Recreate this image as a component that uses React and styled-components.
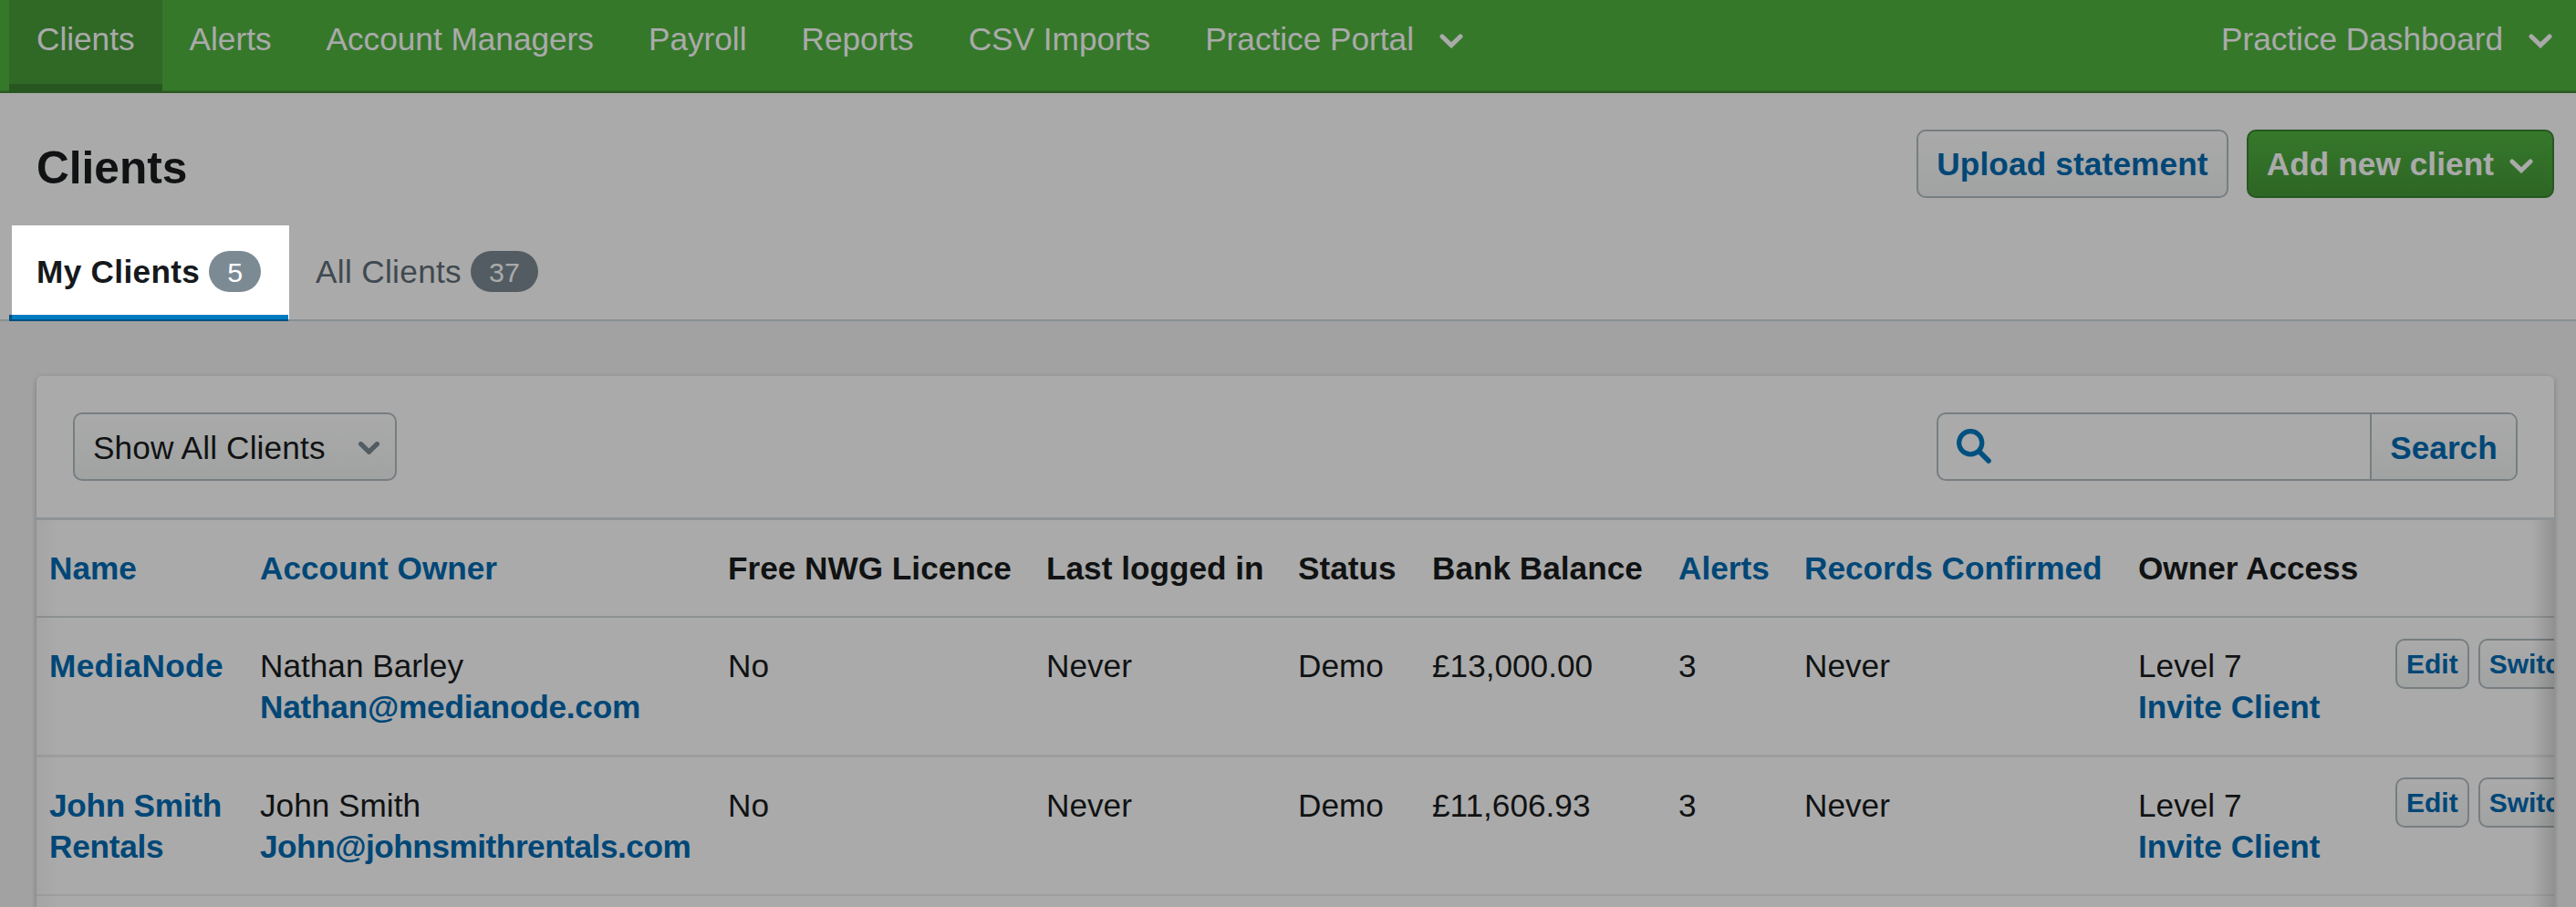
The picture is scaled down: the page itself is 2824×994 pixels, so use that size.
import styled, { createGlobalStyle } from "styled-components";

const columns = [
  { label: "Name", sortable: true },
  { label: "Account Owner", sortable: true },
  { label: "Free NWG Licence" },
  { label: "Last logged in" },
  { label: "Status" },
  { label: "Bank Balance" },
  { label: "Alerts", sortable: true },
  { label: "Records Confirmed", sortable: true },
  { label: "Owner Access" },
];

const clients = [
  {
    name: "MediaNode",
    nameSpacing: 0.35,
    owner: "Nathan Barley",
    email: "Nathan@medianode.com",
    emailSpacing: -0.22,
    balance: "£13,000.00",
  },
  {
    name: "John Smith Rentals",
    nameSpacing: -0.25,
    owner: "John Smith",
    email: "John@johnsmithrentals.com",
    emailSpacing: -0.47,
    balance: "£11,606.93",
  },
];

function Chevron({ size = 26, weight = 5 }) {
  return (
    <svg width={size} height={(size * 16) / 26} viewBox="0 0 26 16" fill="none">
      <path
        d="M3 3 L13 12.6 L23 3"
        stroke="currentColor"
        strokeWidth={weight}
        strokeLinecap="round"
      />
    </svg>
  );
}

function SearchIcon() {
  return (
    <svg width="38" height="38" viewBox="0 0 38 38" fill="none">
      <circle cx="15.2" cy="15.2" r="12.6" stroke="#007ac0" strokeWidth="5.2" />
      <path d="M24.5 24.5 L35 35" stroke="#007ac0" strokeWidth="5.6" strokeLinecap="round" />
    </svg>
  );
}

export default function App() {
  return (
    <Page>
      <GlobalStyle />
      <Nav>
        <NavItem $active>Clients</NavItem>
        <NavItem>Alerts</NavItem>
        <NavItem>Account Managers</NavItem>
        <NavItem>Payroll</NavItem>
        <NavItem>Reports</NavItem>
        <NavItem>CSV Imports</NavItem>
        <NavItem>
          Practice Portal <Chevron />
        </NavItem>
        <NavItem $last>
          Practice Dashboard <Chevron />
        </NavItem>
      </Nav>

      <Header>
        <TitleRow>
          <Title>Clients</Title>
          <Actions>
            <Button>Upload statement</Button>
            <Button $primary>
              Add new client <Chevron />
            </Button>
          </Actions>
        </TitleRow>
        <Tabs>
          <Tab $active>
            My Clients <Badge>5</Badge>
            <Spotlight />
          </Tab>
          <Tab>
            All Clients <Badge>37</Badge>
          </Tab>
        </Tabs>
      </Header>

      <Panel>
        <Toolbar>
          <Select>
            Show All Clients <Chevron size={23} weight={6} />
          </Select>
          <SearchForm>
            <SearchField>
              <SearchIcon />
            </SearchField>
            <SearchButton>Search</SearchButton>
          </SearchForm>
        </Toolbar>
        <Table>
          <HeadRow>
            {columns.map((column) =>
              column.sortable ? (
                <Link key={column.label}>{column.label}</Link>
              ) : (
                <Heading key={column.label}>{column.label}</Heading>
              )
            )}
          </HeadRow>
          {clients.map((client, index) => (
            <Row key={client.name} $first={index === 0}>
              <NameLink $spacing={client.nameSpacing}>{client.name}</NameLink>
              <Cell>
                {client.owner}
                <Link $spacing={client.emailSpacing}>{client.email}</Link>
              </Cell>
              <Cell>No</Cell>
              <Cell>Never</Cell>
              <Cell>Demo</Cell>
              <Cell>{client.balance}</Cell>
              <Cell>3</Cell>
              <Cell>Never</Cell>
              <Cell>
                Level 7<Link>Invite Client</Link>
              </Cell>
              <RowActions $first={index === 0}>
                <SmallButton>Edit</SmallButton>
                <SmallButton>Switch</SmallButton>
              </RowActions>
            </Row>
          ))}
          <ScrollShade $side="left" />
          <ScrollShade $side="right" />
        </Table>
      </Panel>
    </Page>
  );
}

const GlobalStyle = createGlobalStyle`
  * {
    box-sizing: border-box;
  }
  body {
    margin: 0;
    background: #f4f4f4;
    color: #191b1d;
    font-family: "Liberation Sans", Arial, sans-serif;
    font-size: 35.2px;
    line-height: 45px;
  }
`;

const Page = styled.div`
  display: flex;
  flex-direction: column;
  width: 2824px;
  height: 994px;
  overflow: hidden;
`;

const Nav = styled.nav`
  display: flex;
  flex: none;
  height: 102px;
  padding-left: 10px;
  background: #50b43f;
  box-shadow: inset 0 -2px #3f8431, inset 0 -3px #489f39;
`;

const NavItem = styled.a`
  display: flex;
  align-items: center;
  gap: 30px;
  height: 102px;
  padding: 0 30px 17px;
  color: #fff;
  white-space: nowrap;
  ${({ $active }) => $active && "background: #489c39; box-shadow: inset 0 -10px #3d8230;"}
  ${({ $last }) => $last && "margin-left: auto; padding-right: 26px;"}

  svg {
    margin: 4px 0 0 -2px;
  }
`;

const Header = styled.header`
  flex: none;
  height: 250px;
  border-bottom: 2px solid #d0d8dd;
  background: #fff;
`;

const TitleRow = styled.div`
  display: flex;
  justify-content: space-between;
  height: 145px;
  padding: 40px 24px 0 40px;
`;

const Title = styled.h1`
  margin: 12px 0 0;
  font-size: 49.6px;
  line-height: 60px;
`;

const Actions = styled.div`
  display: flex;
  gap: 20px;
`;

const Button = styled.button`
  display: flex;
  align-items: center;
  gap: 17px;
  height: 75px;
  padding: 1px ${({ $primary }) => ($primary ? 21 : 20)}px 0 20px;
  border: 2px solid ${({ $primary }) => ($primary ? "#3a8430" : "#b3bdc2")};
  border-radius: 10px;
  background: ${({ $primary }) =>
    $primary
      ? "linear-gradient(#51b541, #469938)"
      : "linear-gradient(#ffffff, #f2f4f4)"};
  color: ${({ $primary }) => ($primary ? "#fff" : "#006bb3")};
  font: bold 35.2px "Liberation Sans", Arial, sans-serif;
  letter-spacing: ${({ $primary }) => ($primary ? 0.07 : 0.14)}px;
  white-space: nowrap;

  svg {
    margin-top: 4px;
  }
`;

const Tabs = styled.div`
  display: flex;
  height: 105px;
  padding-left: 10px;
`;

const Tab = styled.div`
  position: relative;
  display: flex;
  align-items: center;
  gap: 10px;
  height: 105px;
  padding: 0 30px 4px;
  color: ${({ $active }) => ($active ? "#16191c" : "#5f6e78")};
  font-weight: ${({ $active }) => ($active ? "bold" : "normal")};
  letter-spacing: 0.32px;
  ${({ $active }) => $active && "box-shadow: inset 0 -7px #007ac0;"}
`;

const Badge = styled.span`
  height: 45px;
  padding: 0 20px;
  border-radius: 23px;
  background: #7c8a94;
  color: #fff;
  font-size: 30.4px;
  font-weight: normal;
  letter-spacing: 0;
  line-height: 47px;
`;

// dims everything on the page except the current tab
const Spotlight = styled.div`
  position: absolute;
  z-index: 10;
  top: 0;
  right: -1px;
  bottom: 2px;
  left: 3px;
  box-shadow: 0 0 0 3000px rgba(0, 0, 0, 0.333);
  pointer-events: none;
`;

const Panel = styled.main`
  flex: none;
  height: 640px;
  margin: 60px 24px 0 40px;
  border-radius: 6px;
  background: #fff;
  box-shadow: 0 2px 6px rgba(0, 0, 0, 0.25);
`;

const Toolbar = styled.div`
  display: flex;
  justify-content: space-between;
  align-items: flex-start;
  height: 158px;
  padding: 40px 40px 0;
  border-bottom: 3px solid #d5dde2;
`;

const Select = styled.div`
  display: flex;
  justify-content: space-between;
  align-items: center;
  width: 355px;
  height: 75px;
  padding: 1px 17px 0 20px;
  border: 2px solid #b3bdc2;
  border-radius: 10px;
  background: linear-gradient(#ffffff, #f2f4f4);
  letter-spacing: 0.15px;

  svg {
    margin-top: 2px;
    color: #7c8a94;
  }
`;

const SearchForm = styled.div`
  display: flex;
  width: 637px;
  height: 75px;
  overflow: hidden;
  border: 2px solid #b3bdc2;
  border-radius: 10px;
`;

const SearchField = styled.div`
  flex: 1;
  padding: 16px 20px;
  border-right: 2px solid #b3bdc2;
`;

const SearchButton = styled.button`
  width: 158px;
  padding: 2px 0 0;
  border: 0;
  background: linear-gradient(#ffffff, #f2f4f4);
  color: #006bb3;
  font: bold 35.2px "Liberation Sans", Arial, sans-serif;
`;

const Table = styled.div`
  position: relative;
  height: 482px;
  overflow: hidden;
`;

const Row = styled.div`
  display: grid;
  grid-template-columns: 231px 513px 349px 276px 147px 270px 138px 366px 282px 300px;
  width: 2900px;
  height: ${({ $first }) => ($first ? 153 : 152)}px;
  padding: 30px 0 0 14px;
  border-bottom: ${({ $first }) => ($first ? 3 : 2)}px solid #ecedee;
  white-space: nowrap;
`;

const HeadRow = styled(Row)`
  height: 107px;
  border-bottom: 2px solid #d5dadd;
`;

const Cell = styled.div``;

const Heading = styled.div`
  font-weight: bold;
`;

const Link = styled.a`
  display: block;
  color: #006bb3;
  font-weight: bold;
  letter-spacing: ${({ $spacing }) => $spacing || 0}px;
`;

const NameLink = styled(Link)`
  padding-right: 30px;
  white-space: normal;
`;

const RowActions = styled.div`
  display: flex;
  align-items: flex-start;
  gap: 10px;
  margin-top: ${({ $first }) => ($first ? -7 : -8)}px;
`;

const SmallButton = styled.button`
  height: 55px;
  padding: 0 10px;
  border: 2px solid #b3bdc2;
  border-radius: 10px;
  background: linear-gradient(#ffffff, #f2f4f4);
  color: #006bb3;
  font: bold 30px "Liberation Sans", Arial, sans-serif;
`;

const ScrollShade = styled.div`
  position: absolute;
  top: 0;
  bottom: 0;
  width: 24px;
  ${({ $side }) =>
    $side === "left"
      ? "left: 0; background: linear-gradient(to right, rgba(0, 0, 0, 0.03), transparent);"
      : "right: 0; background: linear-gradient(to left, rgba(0, 0, 0, 0.14), transparent);"}
`;
